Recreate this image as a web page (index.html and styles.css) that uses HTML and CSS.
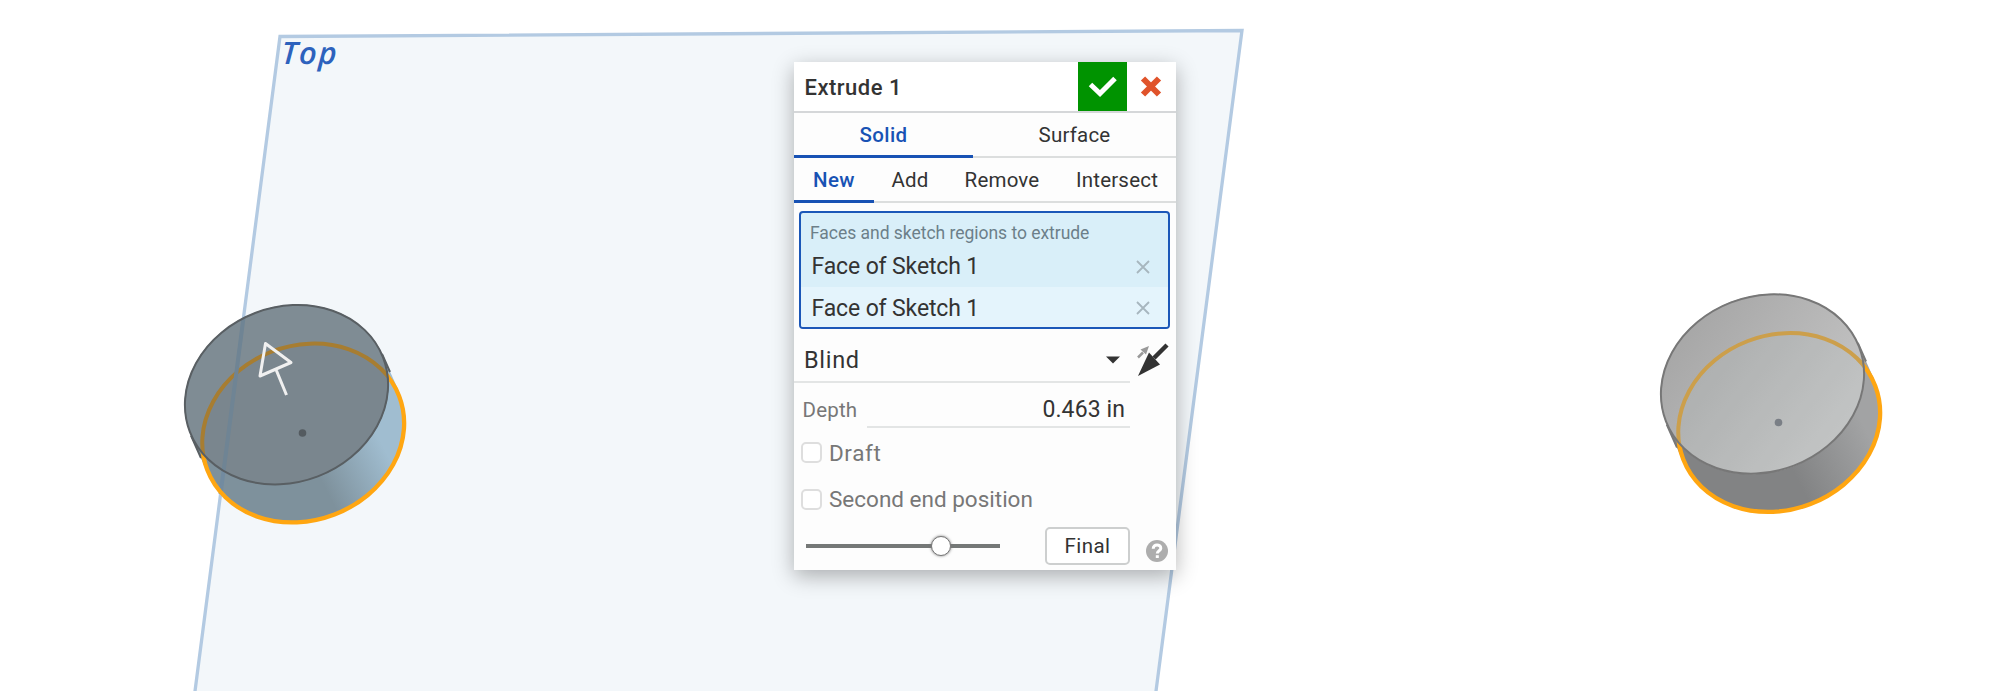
FILE: index.html
```html
<!DOCTYPE html>
<html lang="en">
<head>
<meta charset="utf-8">
<title>Extrude 1</title>
<link rel="stylesheet" href="styles.css">
</head>
<body>
<main class="viewport">
  <svg class="scene" viewBox="0 0 1999 691" width="1999" height="691">
    <defs>
      <linearGradient id="side-blue" gradientUnits="userSpaceOnUse" x1="322" y1="482" x2="385" y2="450">
        <stop offset="0" stop-color="#7e919c"/><stop offset="1" stop-color="#a0bdd0"/>
      </linearGradient>
      <linearGradient id="side-gray" gradientUnits="userSpaceOnUse" x1="1795" y1="475" x2="1870" y2="437">
        <stop offset="0" stop-color="#828384"/><stop offset="1" stop-color="#a2a3a4"/>
      </linearGradient>
      <linearGradient id="top-gray" gradientUnits="userSpaceOnUse" x1="-45" y1="-75" x2="45" y2="75">
        <stop offset="0" stop-color="#a8a8a8"/><stop offset="1" stop-color="#c5c5c5"/>
      </linearGradient>
      <clipPath id="clip-left"><ellipse rx="104" ry="88" transform="translate(286.5 394.7) rotate(-21)"/></clipPath>
      <clipPath id="clip-right"><ellipse rx="104" ry="88" transform="translate(1762.5 384) rotate(-21)"/></clipPath>
    </defs>

    <path class="plane" d="M280 36.500 1242 30.500 1156 691 195 691Z"/>
    <path class="plane-edge" d="M194.500 695 280 36.500 1242 30.500 1155.500 695"/>
    <text class="plane-label" transform="translate(281 64) skewX(-3)">Top</text>

    <g>
      <path fill="url(#side-blue)" d="M382 353.800 399 391.600A104 88 -21 0 1 207.700 473.400L191 435.600A104 88 -21 0 1 382 353.800Z"/>
      <path class="plane-edge-side" d="M225.500 456 220.500 494"/>
      <path class="edge" d="M382 353.800 390 372M201 458 191 435.600"/>
      <ellipse class="rim" rx="102.800" ry="87.300" transform="translate(303.2 433) rotate(-21)"/>
      <ellipse fill="#7f8c94" rx="104" ry="88" transform="translate(286.5 394.7) rotate(-21)"/>
      <g clip-path="url(#clip-left)">
        <ellipse class="rim-hidden-blue" rx="102.800" ry="87.300" transform="translate(303.2 433) rotate(-21)"/>
        <path class="plane-edge-hidden" d="M280 36.500 194.500 695"/>
      </g>
      <ellipse class="edge" rx="103.500" ry="87.500" transform="translate(286.5 394.7) rotate(-21)"/>
      <circle cx="302.500" cy="433" r="3.800" fill="#545b60"/>
      <path class="arrow" d="M265.500 343.500 291 362.500 260 376ZM276 369.500 286.500 395"/>
    </g>

    <g>
      <path fill="url(#side-gray)" d="M1857.800 342.800 1874.800 380.900A104 88 -21 0 1 1683.700 462.900L1666.800 424.600A104 88 -21 0 1 1857.800 342.800Z"/>
      <path class="edge-light" d="M1857.800 342.800 1866 361.500M1677 447.500 1666.800 424.600"/>
      <ellipse class="rim" rx="102.800" ry="87.300" transform="translate(1779.2 422.5) rotate(-21)"/>
      <ellipse fill="url(#top-gray)" rx="104" ry="88" transform="translate(1762.5 384) rotate(-21)"/>
      <g clip-path="url(#clip-right)">
        <ellipse class="rim-hidden-gray" rx="102.800" ry="87.300" transform="translate(1779.2 422.5) rotate(-21)"/>
      </g>
      <ellipse class="edge-light" rx="103.500" ry="87.500" transform="translate(1762.5 384) rotate(-21)"/>
      <circle cx="1778.500" cy="422.500" r="3.800" fill="#7a7f86"/>
    </g>
  </svg>

  <section class="dialog">
    <header class="dialog-header">
      <span class="title">Extrude 1</span>
      <button class="accept" aria-label="Accept"><svg width="49" height="49" viewBox="0 0 49 49"><path d="M12.500 22.500 22 31.500 37 16.500" fill="none" stroke="#fff" stroke-width="5"/></svg></button>
      <button class="cancel" aria-label="Cancel"><svg width="48" height="49" viewBox="0 0 48 49"><path d="M16 16.500 32 32.500M32 16.500 16 32.500" fill="none" stroke="#e0532b" stroke-width="6"/></svg></button>
    </header>
    <nav class="tabs kind-tabs">
      <span class="tab active">Solid</span><span class="tab">Surface</span>
    </nav>
    <nav class="tabs mode-tabs">
      <span class="tab active">New</span><span class="tab">Add</span><span class="tab">Remove</span><span class="tab">Intersect</span>
    </nav>
    <div class="selection">
      <div class="selection-label">Faces and sketch regions to extrude</div>
      <div class="selection-row">Face of Sketch 1<svg width="14" height="14" viewBox="0 0 14 14"><path d="M1 1 13 13M13 1 1 13"/></svg></div>
      <div class="selection-row second">Face of Sketch 1<svg width="14" height="14" viewBox="0 0 14 14"><path d="M1 1 13 13M13 1 1 13"/></svg></div>
    </div>
    <div class="end-type">
      <div class="select">Blind<svg width="14" height="8" viewBox="0 0 14 8"><path d="M0 .5H14L7 7.500Z" fill="#333"/></svg></div>
      <svg class="flip" width="32" height="34" viewBox="0 0 32 34"><path d="M1 14.500 6 9.500" stroke="#999" stroke-width="2.500"/><path d="M12 3 9 11.500 3.500 6.500Z" fill="#999"/><path d="M30 2 17 15" stroke="#333" stroke-width="4.500"/><path d="M1 33 12 9.500 23 21.500Z" fill="#333"/></svg>
    </div>
    <div class="depth"><span class="depth-label">Depth</span><span class="depth-value">0.463 in</span></div>
    <label class="option draft"><i class="box"></i>Draft</label>
    <label class="option"><i class="box"></i>Second end position</label>
    <footer class="dialog-footer">
      <div class="slider"><i class="knob"></i></div>
      <button class="final">Final</button>
      <svg class="help" width="22" height="22" viewBox="0 0 22 22"><circle cx="11" cy="11" r="11" fill="#adadad"/><path d="M7.200 8.700C7.200 3.800 14.800 3.800 14.800 8.300 14.800 10.800 11.300 10.800 11.300 13.600" fill="none" stroke="#fff" stroke-width="3"/><path d="M9.800 15.200H12.800V18H9.800Z" fill="#fff"/></svg>
    </footer>
  </section>
</main>
</body>
</html>
```
FILE: styles.css
```css
* { box-sizing: border-box; }
body { margin: 0; background: #fff; font-family: Roboto, "Liberation Sans", sans-serif; color: #333; }
button { font: inherit; color: inherit; padding: 0; border: 0; background: none; }
svg { display: block; flex: none; }
.viewport { position: relative; width: 1999px; height: 691px; overflow: hidden; }
.plane { fill: #f3f7fa; }
.plane-edge { fill: none; stroke: #b3cae2; stroke-width: 3.3; }
.plane-edge-hidden { fill: none; stroke: #6f8494; stroke-width: 4; }
.plane-edge-side { fill: none; stroke: #728ba0; stroke-width: 4; }
.plane-label { font: italic 600 31px "Open Sans", sans-serif; letter-spacing: 1.6px; fill: #2d62bd; }
.edge { fill: none; stroke: #595f63; stroke-width: 2; }
.edge-light { fill: none; stroke: #777; stroke-width: 2; }
.rim { fill: none; stroke: #ffa611; stroke-width: 4.3; }
.rim-hidden-blue { fill: #7a868e; stroke: #a77d31; stroke-width: 4; }
.rim-hidden-gray { fill: rgba(180, 190, 190, .2); stroke: #cc9f4b; stroke-width: 4; }
.arrow { fill: none; stroke: #f0f0f0; stroke-width: 3; stroke-linejoin: round; }

.dialog { position: absolute; left: 794px; top: 62px; width: 382px; height: 508px; display: flex; flex-direction: column; background: #fdfdfd; box-shadow: 0 6px 20px rgba(0, 0, 0, .3); }
.dialog-header { display: flex; height: 51px; border-bottom: 2px solid #d5d7d9; background: #fff; }
.title { flex: 1; padding-left: 10.5px; font-size: 22px; font-weight: 500; line-height: 51px; letter-spacing: .5px; }
.accept { width: 49px; height: 49px; background: #009300; }
.cancel { width: 49px; height: 49px; }
.tabs { display: flex; height: 45px; font-size: 20.5px; line-height: 45px; letter-spacing: .2px; text-align: center; }
.tab { border-bottom: 2px solid #dcdede; }
.tab.active { color: #1852b4; font-weight: 500; letter-spacing: .4px; border-bottom: 3px solid #1852b4; }
.kind-tabs .tab { width: 203px; }
.kind-tabs .tab.active { width: 179px; }
.mode-tabs .tab:nth-child(1) { width: 80px; }
.mode-tabs .tab:nth-child(2) { width: 72px; }
.mode-tabs .tab:nth-child(3) { width: 112px; }
.mode-tabs .tab:nth-child(4) { width: 118px; }
.selection { margin: 8px 6px 0 5px; height: 119px; padding-top: 6px; border: 2px solid #1b57b8; border-radius: 4px; background: #d9eff9; overflow: hidden; }
.selection-label { height: 27px; padding-left: 9px; font-size: 17.5px; line-height: 28px; letter-spacing: -.03px; color: #6c7f89; }
.selection-row { display: flex; align-items: center; justify-content: space-between; height: 41px; padding: 0 18px 0 10.5px; font-size: 23px; letter-spacing: -.13px; }
.selection-row.second { padding-top: 1px; background: #e4f4fc; }
.selection-row svg { stroke: #a7b6be; stroke-width: 1.8; }
.end-type { display: flex; height: 54px; margin-top: 1px; }
.select { display: flex; align-items: center; justify-content: space-between; width: 336px; padding: 8px 10px 0 10px; border-bottom: 2px solid #e3e5e5; font-size: 23.5px; letter-spacing: .7px; }
.flip { margin: 13px 0 0 7px; }
.depth { display: flex; height: 45px; width: 336px; line-height: 54px; }
.depth-label { width: 73px; padding-left: 8.5px; font-size: 20.5px; letter-spacing: .2px; color: #777; }
.depth-value { flex: 1; padding-right: 5px; border-bottom: 2px solid #e3e5e5; text-align: right; font-size: 23px; letter-spacing: .1px; }
.option { display: flex; align-items: center; gap: 7px; height: 47px; padding-left: 7px; font-size: 22.5px; color: #777; }
.option.draft { margin-top: 1px; letter-spacing: .6px; }
.box { width: 21px; height: 21px; border: 2px solid #dedede; border-radius: 5px; background: #fff; }
.dialog-footer { display: flex; height: 45px; margin-top: 3px; }
.slider { display: flex; align-items: center; width: 194px; height: 4px; margin: 19px 0 0 12px; padding-left: 125px; background: #757877; }
.knob { width: 20px; height: 20px; flex: none; border: 1.5px solid #777; border-radius: 50%; background: #fff; box-shadow: 0 0 3px #777; }
.final { width: 85px; height: 38px; margin: 2px 0 0 45px; border: 2px solid #cdcfcf; border-radius: 5px; background: #fff; font-size: 20.5px; letter-spacing: .4px; }
.help { margin: 15px 0 0 16px; }
```
